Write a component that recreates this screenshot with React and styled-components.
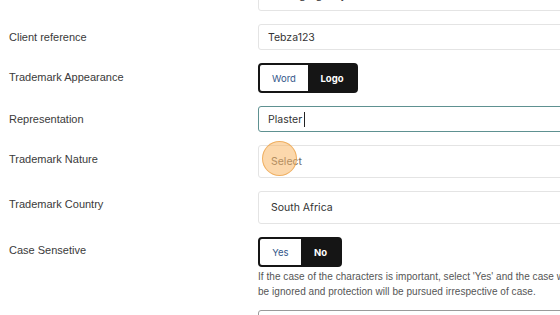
import React from "react";
import styled, { createGlobalStyle } from "styled-components";

const Global = createGlobalStyle`
  html, body { margin: 0; padding: 0; background: #fff; overflow: hidden; }
  body { width: 560px; height: 315px; }
`;

const Page = styled.div`
  display: flex;
  flex-direction: column;
  gap: 13px;
  margin-top: -20px;
  width: 760px;
`;

const Row = styled.div`
  display: grid;
  grid-template-columns: 258px 500px;
  align-items: start;
`;

const Label = styled.div`
  padding: ${(p) => p.$top || 7}px 0 0 9px;
  font-family: "Liberation Sans", Arial, sans-serif;
  font-size: 11px;
  line-height: 13px;
  color: #3a3a3a;
`;

const Field = styled.div`
  display: flex;
  flex-direction: column;
`;

const Input = styled.div`
  box-sizing: border-box;
  height: ${(p) => p.$h || 26}px;
  display: flex;
  align-items: center;
  padding-left: ${(p) => (p.$h === 33 ? 12 : 9)}px;
  border: 1px solid ${(p) => (p.$focus ? "#5e9191" : p.$dark ? "#9a9a9a" : "#e4e4e4")};
  border-radius: 3px;
  background: #fff;
  font-family: Inter, "Noto Sans", sans-serif;
  font-size: 10.5px;
  color: ${(p) => (p.$muted ? "#6a6a6a" : "#333")};
  position: relative;
`;

const Caret = styled.span`
  display: inline-block;
  width: 1px;
  height: 15px;
  background: #222;
  margin-left: 2px;
`;

const Toggle = styled.div`
  display: inline-flex;
  align-self: flex-start;
  box-sizing: border-box;
  height: 30px;
  border: 2px solid #151515;
  border-radius: 4px;
  overflow: hidden;
  background: #151515;
`;

const Opt = styled.div`
  width: ${(p) => p.$w}px;
  display: flex;
  align-items: center;
  justify-content: center;
  font-family: Inter, "Noto Sans", sans-serif;
  font-size: 9.5px;
  font-weight: ${(p) => (p.$on ? 700 : 400)};
  color: ${(p) => (p.$on ? "#fff" : "#34588a")};
  background: ${(p) => (p.$on ? "#151515" : "#fff")};
`;

const Help = styled.div`
  margin: 2px 0 -2px;
  font-family: "Liberation Sans", Arial, sans-serif;
  font-size: 10px;
  letter-spacing: 0.05px;
  line-height: 15px;
  color: #555;
  white-space: nowrap;
`;

const Click = styled.div`
  position: absolute;
  left: 3px;
  top: -5px;
  width: 35px;
  height: 35px;
  box-sizing: border-box;
  border-radius: 50%;
  background: rgba(250, 178, 90, 0.5);
  border: 1px solid rgba(235, 160, 70, 0.75);
  pointer-events: none;
`;

export default function App() {
  return (
    <>
      <Global />
      <Page>
        <Row>
          <Label></Label>
          <Field>
            <Input $h={31}>Trading Agency</Input>
          </Field>
        </Row>
        <Row>
          <Label>Client reference</Label>
          <Field>
            <Input>Tebza123</Input>
          </Field>
        </Row>
        <Row>
          <Label $top={8}>Trademark Appearance</Label>
          <Field>
            <Toggle>
              <Opt $w={48}>Word</Opt>
              <Opt $w={48} $on>Logo</Opt>
            </Toggle>
          </Field>
        </Row>
        <Row>
          <Label>Representation</Label>
          <Field>
            <Input $focus>
              Plaster<Caret />
            </Input>
          </Field>
        </Row>
        <Row>
          <Label $top={8}>Trademark Nature</Label>
          <Field>
            <Input $h={33} $muted>
              Select
              <Click />
            </Input>
          </Field>
        </Row>
        <Row>
          <Label>Trademark Country</Label>
          <Field>
            <Input $h={33}>South Africa</Input>
          </Field>
        </Row>
        <Row>
          <Label>Case Sensetive</Label>
          <Field>
            <Toggle>
              <Opt $w={41}>Yes</Opt>
              <Opt $w={39} $on>No</Opt>
            </Toggle>
            <Help>
              If the case of the characters is important, select 'Yes' and the case will not
              <br />
              be ignored and protection will be pursued irrespective of case.
            </Help>
          </Field>
        </Row>
        <Row>
          <Label></Label>
          <Field>
            <Input $dark></Input>
          </Field>
        </Row>
      </Page>
    </>
  );
}
